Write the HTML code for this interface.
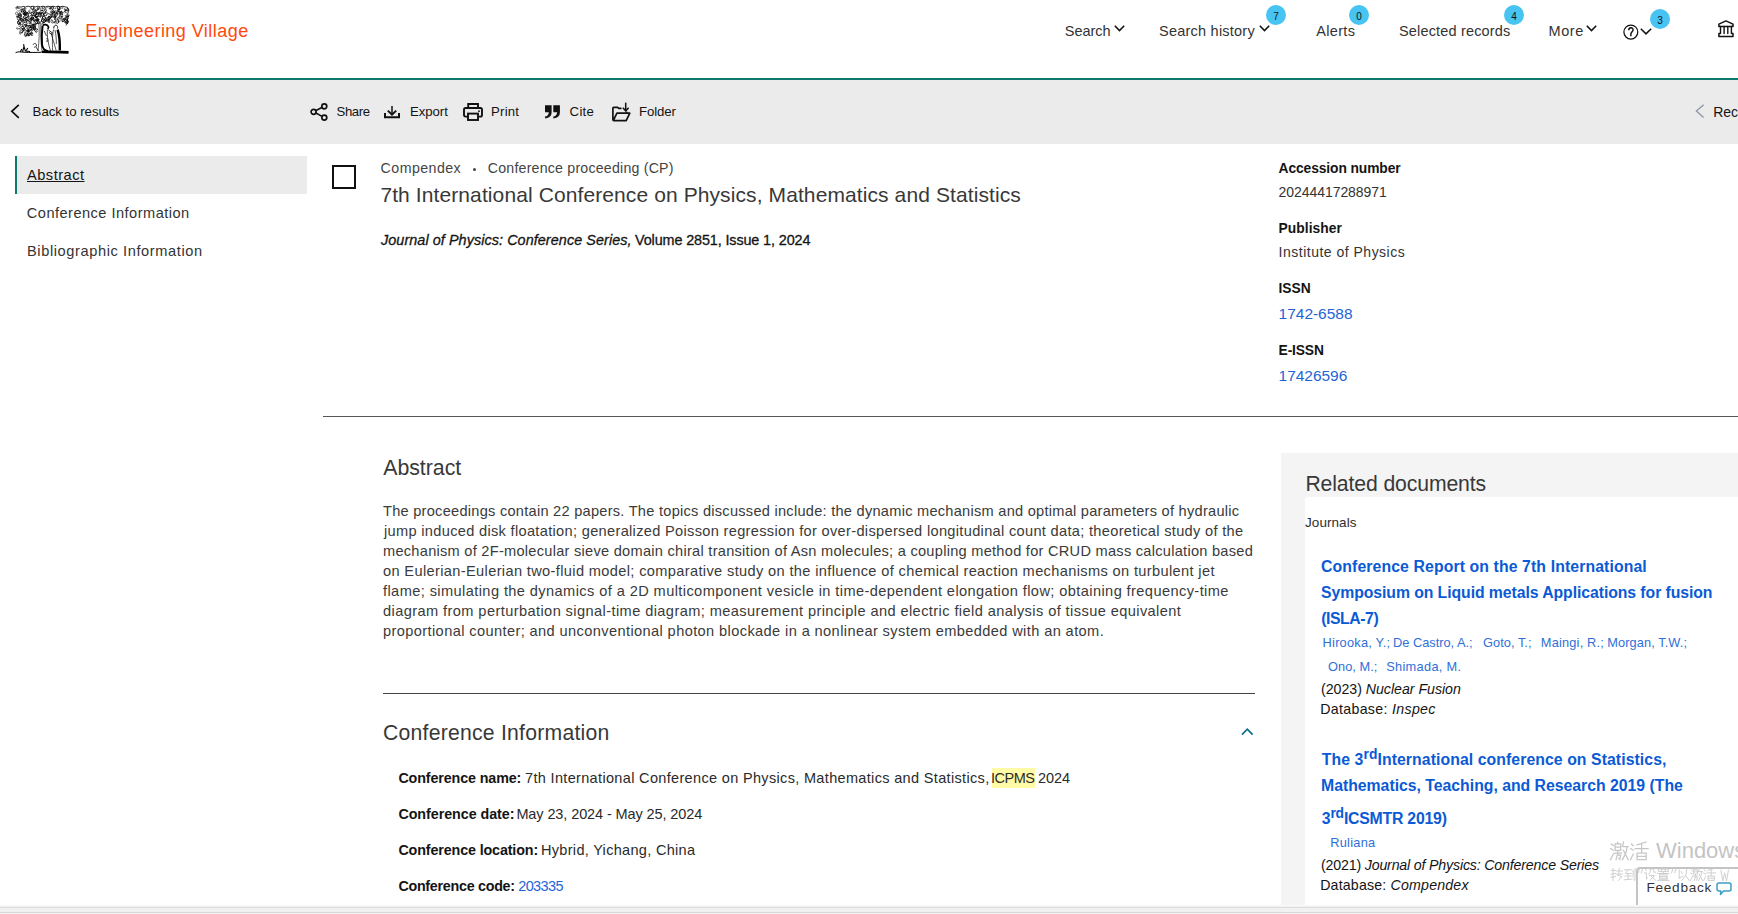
<!DOCTYPE html>
<html><head><meta charset="utf-8">
<style>
html,body{margin:0;padding:0;}
html{overflow:hidden;}
body{width:1738px;height:914px;overflow:hidden;position:relative;background:#fff;font-family:"Liberation Sans",sans-serif;}
.t{position:absolute;white-space:nowrap;line-height:1;font-family:"Liberation Sans",sans-serif;}
.abs{position:absolute;}
svg{position:absolute;overflow:visible;}
.badge{position:absolute;width:20px;height:20px;border-radius:50%;background:#47c4f1;color:#111;font-size:10px;line-height:23px;text-align:center;font-family:"Liberation Sans",sans-serif;}
</style></head><body>
<!-- header -->
<svg style="left:0;top:0" width="80" height="60" viewBox="0 0 80 60"><path d="M20.4 14.6A0.9 0.9 0 1 1 19.3 15.0M43.6 8.8A1.0 1.0 0 0 1 43.2 6.9M33.0 13.6A1.1 1.1 0 1 1 32.8 12.4M61.7 16.6A1.7 1.7 0 0 1 60.3 19.6M22.2 14.0A0.9 0.9 0 1 1 22.0 13.1M25.8 15.3A1.5 1.5 0 1 1 27.8 13.3M19.0 23.5A1.0 1.0 0 1 1 20.0 25.1M67.7 20.0A1.3 1.3 0 1 1 65.7 21.8M19.5 12.0A1.3 1.3 0 1 1 17.6 12.4M64.4 13.1A0.8 0.8 0 1 1 65.3 12.0M18.9 28.8A0.8 0.8 0 1 1 19.4 30.1M53.9 20.8A1.4 1.4 0 1 1 51.4 21.5M62.0 19.1A1.3 1.3 0 1 1 63.2 16.7M29.8 12.4A1.2 1.2 0 1 1 30.5 10.2M49.4 20.4A1.1 1.1 0 1 1 48.8 20.2M32.2 31.2A0.8 0.8 0 1 1 31.9 29.8M60.7 13.6A0.9 0.9 0 1 1 60.0 12.5M52.5 13.3A1.2 1.2 0 0 1 51.1 11.3M31.4 35.5A1.6 1.6 0 0 1 33.1 32.9M67.7 20.9A1.2 1.2 0 1 1 66.2 21.9M40.0 15.2A1.0 1.0 0 1 1 39.8 15.8M19.8 28.6A0.9 0.9 0 1 1 21.5 29.1M42.7 20.1A1.1 1.1 0 1 1 44.5 20.3M61.8 11.9A1.5 1.5 0 1 1 60.7 11.9M33.0 34.6A1.0 1.0 0 1 1 32.7 33.9M28.8 29.1A1.0 1.0 0 1 1 28.9 28.1M57.2 8.8A1.2 1.2 0 0 1 58.4 10.8M31.5 21.0A1.3 1.3 0 1 1 33.3 21.6M23.6 20.9A1.5 1.5 0 1 1 26.2 19.6M29.2 32.8A1.5 1.5 0 1 1 27.8 33.3M57.6 19.2A1.5 1.5 0 1 1 55.7 17.3M29.1 19.2A0.8 0.8 0 1 1 29.2 17.7M22.7 20.7A1.0 1.0 0 1 1 23.7 21.6M65.0 18.3A1.3 1.3 0 1 1 66.3 20.3M31.4 28.3A1.1 1.1 0 1 1 29.4 27.7M24.4 28.7A1.2 1.2 0 1 1 23.1 28.3M54.7 19.0A1.7 1.7 0 1 1 52.4 20.0M49.6 20.4A1.0 1.0 0 1 1 48.7 19.1M16.2 8.4A1.0 1.0 0 1 1 17.6 8.8M17.9 8.6A1.5 1.5 0 1 1 17.6 10.3M33.9 22.3A1.5 1.5 0 1 1 31.2 22.4M21.0 33.6A0.9 0.9 0 1 1 20.5 32.3M18.9 14.1A1.5 1.5 0 1 1 19.2 16.9M63.8 21.0A1.5 1.5 0 1 1 65.6 18.7M27.7 18.1A1.1 1.1 0 1 1 29.5 17.2M58.7 6.7A1.3 1.3 0 0 1 58.2 9.3M19.5 24.7A0.9 0.9 0 1 1 18.6 25.7M27.0 28.5A1.3 1.3 0 1 1 25.9 30.5M41.3 21.3A1.4 1.4 0 1 1 40.4 21.9M17.7 14.8A0.9 0.9 0 1 1 17.3 15.8M19.5 19.5A1.3 1.3 0 0 1 17.4 21.2M24.8 11.7A1.0 1.0 0 1 1 24.0 13.1M59.9 20.2A1.0 1.0 0 1 1 59.3 19.8M41.9 12.6A0.8 0.8 0 1 1 41.2 12.0M44.5 21.9A1.0 1.0 0 1 1 43.5 20.9M33.9 29.8A1.4 1.4 0 1 1 36.1 31.7M20.6 15.2A1.4 1.4 0 1 1 19.7 12.9M60.0 16.2A1.5 1.5 0 1 1 60.8 16.8M30.5 15.5A1.2 1.2 0 1 1 31.2 17.6M53.0 15.6A1.7 1.7 0 1 1 53.5 17.5M23.4 17.6A1.6 1.6 0 0 1 26.1 19.2M24.5 10.4A1.2 1.2 0 1 1 24.6 9.5M26.1 36.6A1.4 1.4 0 0 1 25.1 34.0M61.0 12.3A1.3 1.3 0 0 1 58.6 11.5M25.1 21.1A0.9 0.9 0 1 1 26.5 21.1M42.4 15.3A1.3 1.3 0 1 1 44.2 14.8M49.9 9.5A1.7 1.7 0 1 1 51.0 12.1M56.8 16.0A1.3 1.3 0 1 1 54.4 14.8M41.9 17.5A0.8 0.8 0 1 1 41.5 18.8M23.3 22.7A1.7 1.7 0 1 1 20.2 22.0M33.2 6.5A1.6 1.6 0 1 1 31.0 8.4M47.3 6.9A0.8 0.8 0 1 1 45.8 7.5M41.5 11.9A1.1 1.1 0 1 1 40.8 11.4M26.6 24.9A1.0 1.0 0 0 1 25.3 26.4M55.3 14.5A1.6 1.6 0 1 1 53.3 14.4M38.7 9.4A1.0 1.0 0 1 1 39.9 9.0M40.0 22.7A1.3 1.3 0 1 1 39.0 21.1M28.4 31.8A0.9 0.9 0 1 1 29.3 31.4M30.8 22.4A1.0 1.0 0 1 1 30.5 22.1M67.1 12.7A1.5 1.5 0 1 1 67.6 10.5M26.9 20.7A1.0 1.0 0 1 1 27.7 22.2M23.9 10.7A0.8 0.8 0 1 1 25.2 11.4M57.4 14.2A0.9 0.9 0 0 1 57.9 12.5M18.5 19.8A1.1 1.1 0 1 1 19.1 19.5M18.1 14.7A1.6 1.6 0 1 1 17.4 11.9M33.4 15.4A1.7 1.7 0 0 1 36.2 17.2M25.7 16.5A1.0 1.0 0 1 1 27.5 17.2M62.6 12.8A1.1 1.1 0 1 1 62.3 11.4M25.9 13.6A1.2 1.2 0 1 1 24.5 13.0M43.1 8.9A1.2 1.2 0 0 1 42.7 6.6M32.7 20.1A1.3 1.3 0 1 1 33.0 18.5M22.7 11.3A1.1 1.1 0 1 1 22.3 13.2M61.2 13.9A1.1 1.1 0 1 1 62.6 12.3M63.0 14.0A1.4 1.4 0 1 1 61.8 11.9M17.2 17.9A1.1 1.1 0 1 1 19.2 18.4M36.2 19.9A1.0 1.0 0 1 1 36.9 21.7M35.4 17.8A0.9 0.9 0 0 1 36.7 16.7M46.6 21.6A1.1 1.1 0 0 1 46.4 19.5M37.7 18.0A1.0 1.0 0 1 1 36.8 17.9M21.6 22.5A1.1 1.1 0 1 1 22.2 22.8M22.5 24.8A1.2 1.2 0 1 1 24.1 26.4M55.4 23.6A1.0 1.0 0 1 1 56.0 21.7M60.9 7.6A1.0 1.0 0 1 1 61.5 8.5M21.9 19.1A1.4 1.4 0 1 1 21.9 16.3M66.2 10.8A1.4 1.4 0 1 1 68.1 11.4M30.5 16.8A1.4 1.4 0 1 1 29.7 16.9M59.0 11.2A1.0 1.0 0 1 1 59.2 10.5M42.4 9.9A1.1 1.1 0 1 1 41.3 8.6M47.8 14.6A1.0 1.0 0 1 1 49.6 15.1M17.2 9.5A1.6 1.6 0 0 1 18.2 6.4M24.9 33.5A1.2 1.2 0 1 1 26.0 34.1M54.6 12.2A0.8 0.8 0 1 1 53.8 10.7M33.3 29.3A1.1 1.1 0 0 1 35.4 29.1M66.3 19.9A1.4 1.4 0 1 1 67.3 19.5M34.5 26.9A1.1 1.1 0 1 1 35.3 26.7M52.3 12.2A0.9 0.9 0 1 1 51.8 10.6M65.6 16.7A1.0 1.0 0 1 1 66.0 16.9M19.8 32.4A1.4 1.4 0 1 1 21.5 33.4M34.6 12.5A1.3 1.3 0 1 1 35.6 14.5" fill="none" stroke="#000" stroke-width="0.55"/><path d="M63.8 19.8A1.3 1.3 0 1 1 65.8 21.3M41.4 14.6A1.7 1.7 0 1 1 40.6 13.2M62.8 21.6A1.7 1.7 0 0 1 65.4 19.4M56.6 15.1A0.9 0.9 0 1 1 57.1 15.2M45.1 18.9A1.0 1.0 0 1 1 45.3 20.8M21.2 20.0A1.0 1.0 0 1 1 21.7 19.9M30.6 34.0A1.0 1.0 0 1 1 31.4 34.4M29.8 11.3A1.5 1.5 0 1 1 27.0 12.1M38.6 9.0A0.8 0.8 0 1 1 36.9 9.1M28.5 32.8A1.3 1.3 0 1 1 29.5 30.3M25.4 18.4A1.3 1.3 0 1 1 24.5 16.1M20.2 22.1A1.5 1.5 0 1 1 18.6 21.5M35.1 26.1A1.6 1.6 0 1 1 32.4 27.1M47.7 17.0A1.3 1.3 0 0 1 49.9 18.6M53.0 17.3A1.5 1.5 0 1 1 54.4 19.5M31.7 27.9A1.0 1.0 0 1 1 32.2 27.3M31.8 27.1A1.0 1.0 0 1 1 32.6 27.6M53.0 12.4A1.0 1.0 0 1 1 54.3 12.3M37.6 31.4A1.6 1.6 0 1 1 37.9 30.3M23.2 19.3A1.4 1.4 0 1 1 20.7 19.8M66.4 21.7A1.4 1.4 0 1 1 67.4 20.3M28.2 33.7A1.7 1.7 0 1 1 25.8 32.4M59.4 9.3A1.5 1.5 0 1 1 59.0 6.5M22.4 9.4A1.3 1.3 0 1 1 21.4 10.1M67.5 22.1A1.7 1.7 0 1 1 65.0 20.0M29.3 28.4A1.4 1.4 0 1 1 29.7 29.6M33.1 16.9A1.6 1.6 0 1 1 30.4 18.3M67.7 23.5A1.3 1.3 0 1 1 68.4 21.5M51.2 8.7A1.3 1.3 0 1 1 51.8 9.2M28.7 21.0A0.9 0.9 0 1 1 29.4 21.6M24.9 14.3A1.4 1.4 0 1 1 26.8 12.5M24.7 25.3A1.4 1.4 0 1 1 25.0 26.5M67.4 8.3A1.3 1.3 0 1 1 66.1 10.0M26.1 8.4A0.9 0.9 0 1 1 25.2 7.3M46.0 11.5A1.0 1.0 0 1 1 46.6 10.8M65.9 8.7A0.9 0.9 0 1 1 64.4 8.4M47.6 18.5A1.3 1.3 0 1 1 47.8 19.2M26.8 36.5A1.4 1.4 0 1 1 28.7 36.1M42.7 16.8A1.7 1.7 0 1 1 42.3 18.9M27.3 34.0A1.3 1.3 0 1 1 27.4 34.7M58.8 7.0A1.3 1.3 0 0 1 58.9 9.7M38.3 22.5A1.7 1.7 0 1 1 39.7 20.2M38.4 14.8A1.3 1.3 0 1 1 39.7 15.4M55.4 12.8A0.9 0.9 0 1 1 54.4 12.5M33.1 13.9A1.4 1.4 0 1 1 34.0 15.8M56.7 11.8A1.0 1.0 0 1 1 56.3 11.1M43.9 7.5A0.9 0.9 0 1 1 43.6 8.8M34.6 21.7A1.0 1.0 0 1 1 35.8 21.6M36.9 15.1A1.5 1.5 0 1 1 39.0 15.1M53.3 16.0A1.5 1.5 0 1 1 50.9 14.2M35.2 29.3A1.1 1.1 0 1 1 35.2 27.9M24.1 23.1A1.5 1.5 0 1 1 24.4 24.5M24.2 31.1A1.6 1.6 0 0 1 24.4 27.9M59.0 20.0A1.2 1.2 0 1 1 59.4 18.7M34.4 11.6A1.0 1.0 0 1 1 36.3 11.3M25.0 13.8A1.0 1.0 0 1 1 24.4 15.5M30.8 13.9A1.6 1.6 0 1 1 32.2 15.6M29.5 21.6A0.9 0.9 0 0 1 29.6 23.5M58.3 12.3A1.3 1.3 0 1 1 60.9 12.8M31.5 16.4A0.9 0.9 0 1 1 32.7 15.5M33.7 27.9A0.9 0.9 0 1 1 35.3 27.6M52.1 13.7A1.3 1.3 0 0 1 54.4 12.7M57.8 13.7A1.4 1.4 0 1 1 59.3 11.7M60.4 9.4A0.9 0.9 0 1 1 60.3 8.2M37.0 16.4A1.2 1.2 0 1 1 35.2 15.3M32.8 26.8A0.9 0.9 0 1 1 34.3 26.5M22.0 29.3A1.6 1.6 0 1 1 24.4 31.1M21.0 27.9A1.7 1.7 0 1 1 22.1 29.7M35.4 20.2A0.9 0.9 0 1 1 33.6 20.4M46.9 14.1A1.6 1.6 0 1 1 46.0 12.8M22.5 30.9A1.1 1.1 0 1 1 20.6 31.8M50.4 14.1A1.4 1.4 0 1 1 49.6 16.6M38.2 18.7A1.3 1.3 0 1 1 36.0 18.7M33.5 6.8A1.5 1.5 0 1 1 31.8 6.3M32.5 18.7A1.0 1.0 0 1 1 32.5 17.9M28.1 28.4A1.3 1.3 0 0 1 25.9 29.9M60.8 18.1A1.2 1.2 0 1 1 61.4 17.3M25.1 11.9A1.4 1.4 0 1 1 23.6 14.0M26.6 13.9A1.6 1.6 0 1 1 27.4 17.0M41.2 10.5A1.3 1.3 0 1 1 41.9 12.9M58.0 21.0A1.3 1.3 0 1 1 56.4 21.2M29.9 30.3A0.9 0.9 0 1 1 28.6 30.1M47.7 21.7A1.0 1.0 0 0 1 49.5 22.8M23.9 13.0A0.9 0.9 0 1 1 23.3 13.7M38.8 8.4A0.8 0.8 0 1 1 38.2 7.6M27.5 15.1A1.3 1.3 0 1 1 28.5 13.1M49.7 6.8A1.1 1.1 0 1 1 49.0 7.5M63.5 19.4A1.2 1.2 0 1 1 61.7 20.6M25.6 20.9A1.1 1.1 0 1 1 25.9 21.3M33.5 12.0A1.6 1.6 0 1 1 35.3 12.2M33.0 17.3A0.9 0.9 0 1 1 31.5 18.0M68.9 14.6A1.4 1.4 0 1 1 66.3 15.5M32.6 18.6A0.9 0.9 0 1 1 32.8 19.8M28.2 26.9A1.0 1.0 0 1 1 29.4 27.6M34.8 22.2A1.6 1.6 0 1 1 32.9 23.7M25.5 14.5A1.4 1.4 0 0 1 24.8 11.8M35.5 12.4A1.2 1.2 0 1 1 35.5 14.4M68.2 15.6A1.1 1.1 0 1 1 66.2 16.5M43.5 10.3A0.9 0.9 0 0 1 42.0 9.6M19.6 20.2A1.5 1.5 0 1 1 22.6 20.0M53.0 15.1A1.4 1.4 0 1 1 55.0 13.2M44.6 18.0A1.4 1.4 0 1 1 44.2 19.3M18.5 28.3A0.9 0.9 0 1 1 17.0 27.5M43.9 22.0A1.1 1.1 0 1 1 45.0 21.8M17.1 22.1A1.4 1.4 0 1 1 18.5 24.4M45.4 13.9A1.1 1.1 0 1 1 46.9 13.9M20.4 17.8A1.5 1.5 0 1 1 21.5 16.5M38.0 15.6A1.3 1.3 0 1 1 35.5 16.0M33.2 29.3A0.9 0.9 0 1 1 31.7 28.7M27.5 19.9A1.4 1.4 0 1 1 26.9 17.2M49.6 19.1A1.4 1.4 0 1 1 50.6 17.3" fill="none" stroke="#000" stroke-width="0.8"/><g fill="#000"><ellipse cx="48.9" cy="19.9" rx="0.7" ry="0.5"/><ellipse cx="65.3" cy="10.7" rx="0.6" ry="0.7"/><ellipse cx="54.9" cy="15.7" rx="0.8" ry="0.7"/><ellipse cx="41.5" cy="13.3" rx="0.8" ry="0.6"/><ellipse cx="58.1" cy="21.9" rx="0.9" ry="0.3"/><ellipse cx="28.5" cy="31.0" rx="0.6" ry="0.5"/><ellipse cx="61.7" cy="12.1" rx="0.5" ry="0.6"/><ellipse cx="19.0" cy="23.2" rx="0.8" ry="0.5"/><ellipse cx="28.1" cy="30.8" rx="0.8" ry="0.6"/><ellipse cx="58.0" cy="10.7" rx="0.6" ry="0.3"/><ellipse cx="17.0" cy="16.7" rx="0.8" ry="0.6"/><ellipse cx="21.3" cy="11.6" rx="0.6" ry="0.6"/><ellipse cx="26.2" cy="25.5" rx="0.8" ry="0.6"/><ellipse cx="25.6" cy="26.7" rx="0.6" ry="0.3"/><ellipse cx="33.3" cy="15.8" rx="0.7" ry="0.4"/><ellipse cx="24.8" cy="10.0" rx="0.7" ry="0.5"/><ellipse cx="22.0" cy="9.6" rx="0.9" ry="0.5"/><ellipse cx="34.3" cy="12.1" rx="0.9" ry="0.6"/><ellipse cx="54.8" cy="17.2" rx="0.6" ry="0.5"/><ellipse cx="22.9" cy="25.6" rx="0.6" ry="0.6"/><ellipse cx="37.1" cy="20.2" rx="0.7" ry="0.7"/><ellipse cx="33.7" cy="27.8" rx="0.5" ry="0.5"/><ellipse cx="30.4" cy="33.1" rx="0.5" ry="0.6"/><ellipse cx="51.5" cy="20.1" rx="0.9" ry="0.5"/><ellipse cx="39.2" cy="8.0" rx="0.6" ry="0.4"/><ellipse cx="30.8" cy="27.5" rx="0.7" ry="0.4"/><ellipse cx="37.2" cy="10.1" rx="0.8" ry="0.4"/><ellipse cx="37.7" cy="16.6" rx="0.8" ry="0.6"/><ellipse cx="20.4" cy="33.8" rx="0.4" ry="0.4"/><ellipse cx="35.2" cy="28.4" rx="0.7" ry="0.4"/><ellipse cx="40.3" cy="17.2" rx="0.6" ry="0.4"/><ellipse cx="18.6" cy="20.3" rx="0.6" ry="0.6"/><ellipse cx="26.3" cy="17.5" rx="0.5" ry="0.5"/><ellipse cx="55.1" cy="8.6" rx="0.5" ry="0.6"/><ellipse cx="28.7" cy="31.1" rx="0.8" ry="0.6"/><ellipse cx="21.5" cy="20.5" rx="0.4" ry="0.6"/><ellipse cx="43.9" cy="22.5" rx="0.5" ry="0.6"/><ellipse cx="31.3" cy="21.7" rx="0.5" ry="0.5"/><ellipse cx="22.0" cy="8.7" rx="0.7" ry="0.4"/><ellipse cx="57.0" cy="13.7" rx="0.6" ry="0.3"/></g><path d="M17 8 Q19 5.8 21 7.2 Q23 5.6 25.5 7 Q28 5.5 30.5 6.8 Q33 5.6 35.5 6.9 Q38 5.5 40.5 6.8 Q43 5.6 45.5 6.9 Q48 5.5 50.5 6.8 Q53 5.6 55.5 6.9 Q58 5.5 60.5 6.8 Q63 5.6 65.5 7 Q68 6.5 68 9 Q69 12 67.6 14 Q69 17 67.5 20 Q68.5 23 66 25.5" fill="none" stroke="#000" stroke-width="0.8"/><path d="M40 23 L35 15 M41 22 L44 13 M43 23 L52 17 M39 23 L28 26" fill="none" stroke="#000" stroke-width="0.9"/><path d="M38.8 23 C39.6 31 39.2 41 38 51 M40.8 24 C40.6 33 41 43 41.8 50" fill="none" stroke="#000" stroke-width="0.6"/><path d="M42.6 25.6 C41.8 31 41.6 38 42 44.5 C42.4 48 44.5 50.5 48 51.2" fill="none" stroke="#000" stroke-width="2.0"/><path d="M42.8 25.5 C44 24.3 47.2 24.2 48.4 26.6 C48.8 27.6 48.2 28.5 47.6 29" fill="none" stroke="#000" stroke-width="1.7"/><path d="M47.4 29.5 C46.8 36 48.2 44 50.5 50.8" fill="none" stroke="#000" stroke-width="0.7"/><path d="M46.3 38.6 C47.8 38.4 48.4 40.2 47.4 41.4 C46.6 41.8 46.2 41 46.6 40.6 M44.2 31 L46.5 36" fill="none" stroke="#000" stroke-width="0.7"/><path d="M48.4 30 L53 33.4 M49 32.5 L52.5 35" fill="none" stroke="#000" stroke-width="0.8"/><path d="M53.8 28.5 C53.4 26.2 55 25 56.3 25.3 C57.6 25.6 57.9 27.2 57.4 28.6" fill="none" stroke="#000" stroke-width="0.9"/><path d="M57.6 29.6 C59.4 35 60 43 59.8 50.5" fill="none" stroke="#000" stroke-width="2.4"/><path d="M53.6 29.5 C52.4 34 52.2 42 52.6 50.5 M51 33 L56.2 50.6 M55 30 C56 34 56.5 40 56.3 44" fill="none" stroke="#000" stroke-width="0.65"/><path d="M15.6 52.6 C18 51.4 21 52 24 52.2 C30 52.6 36 52.4 41 52.3" fill="none" stroke="#000" stroke-width="1.0"/><path d="M41.5 51.8 C50 52 60 51.6 68.6 52.4" fill="none" stroke="#000" stroke-width="2.6"/><path d="M22.5 52 L24 46.5 L25.6 51.6 M24 46.5 L23.6 44.2 M26.2 50.5 L27.8 48 M20.2 52 L21.8 49 M25 51 L30 51.5" fill="none" stroke="#000" stroke-width="1.1"/><path d="M33 44.8 C34 42.8 35.8 43.2 36.6 45 C36.4 46.8 35 47.6 34 47 M36.2 47.2 L38.5 51" fill="none" stroke="#000" stroke-width="0.8"/></svg>
<div class="abs" style="left:0;top:78px;width:1738px;height:2px;background:#0b7a6c"></div>
<!-- nav chevrons -->
<svg style="left:1114px;top:25px" width="11" height="7" viewBox="0 0 11 7"><path d="M0.8 0.8 L5.5 5.6 L10.2 0.8" fill="none" stroke="#111" stroke-width="1.5"/></svg>
<svg style="left:1259px;top:25px" width="11" height="7" viewBox="0 0 11 7"><path d="M0.8 0.8 L5.5 5.6 L10.2 0.8" fill="none" stroke="#111" stroke-width="1.5"/></svg>
<svg style="left:1586px;top:25px" width="11" height="7" viewBox="0 0 11 7"><path d="M0.8 0.8 L5.5 5.6 L10.2 0.8" fill="none" stroke="#111" stroke-width="1.5"/></svg>
<svg style="left:1640px;top:27.6px" width="12" height="7" viewBox="0 0 12 7"><path d="M0.8 0.8 L6 5.9 L11.2 0.8" fill="none" stroke="#111" stroke-width="1.5"/></svg>
<!-- help circle -->
<svg style="left:1622.5px;top:23.5px" width="16" height="16" viewBox="0 0 16 16"><circle cx="7.85" cy="8.05" r="6.95" fill="none" stroke="#111" stroke-width="1.25"/><path d="M5.7 6.3 C5.8 4.5 6.9 3.8 8 3.8 C9.3 3.8 10.2 4.8 10.1 6 C10 7.4 8.2 8.2 7.9 9.8 L7.85 12.3" fill="none" stroke="#111" stroke-width="1.45"/></svg>
<!-- bank -->
<svg style="left:1714px;top:16px" width="24" height="24" viewBox="0 0 24 24"><path d="M4.9 10.4 L4.9 8.1 L11.95 4.9 L19 8.1 L19 10.4 Z" fill="none" stroke="#111" stroke-width="1.5" stroke-linejoin="round"/><path d="M6.5 10.4 L6.5 17.4 M17.4 10.4 L17.4 17.4 M10.1 10.4 L10.1 17.6 M13.8 10.4 L13.8 17.6" stroke="#111" stroke-width="1.4" stroke-linecap="round"/><path d="M6.5 17.4 L4.9 17.4 L4.9 20.6 L19 20.6 L19 17.4 L17.4 17.4" fill="none" stroke="#111" stroke-width="1.5" stroke-linejoin="round"/></svg>
<!-- badges -->
<div class="badge" style="left:1266px;top:5px">7</div>
<div class="badge" style="left:1349px;top:5px">0</div>
<div class="badge" style="left:1504px;top:5px">4</div>
<div class="badge" style="left:1650px;top:9px">3</div>

<!-- toolbar -->
<div class="abs" style="left:0;top:80px;width:1738px;height:64px;background:#ebebeb"></div>
<svg style="left:10px;top:104px" width="10" height="15" viewBox="0 0 10 15"><path d="M8.8 0.8 L1.8 7.3 L8.8 13.8" fill="none" stroke="#111" stroke-width="1.7"/></svg>
<!-- share -->
<svg style="left:310px;top:103px" width="18" height="18" viewBox="0 0 18 18"><line x1="3.6" y1="8.8" x2="14.3" y2="3.3" stroke="#111" stroke-width="1.6"/><line x1="3.6" y1="8.8" x2="14.3" y2="14.6" stroke="#111" stroke-width="1.6"/><circle cx="3.6" cy="8.8" r="2.5" fill="#ebebeb" stroke="#111" stroke-width="1.7"/><circle cx="14.3" cy="3.3" r="2.5" fill="#ebebeb" stroke="#111" stroke-width="1.7"/><circle cx="14.3" cy="14.6" r="2.5" fill="#ebebeb" stroke="#111" stroke-width="1.7"/></svg>
<!-- export -->
<svg style="left:384px;top:105px" width="16" height="14" viewBox="0 0 16 14"><path d="M1 8 L1 12.2 L15 12.2 L15 8" fill="none" stroke="#111" stroke-width="2"/><path d="M8 1 L8 9.5" stroke="#111" stroke-width="1.5"/><path d="M3.8 5.6 L8 9.6 L12.2 5.6" fill="none" stroke="#111" stroke-width="1.9"/></svg>
<!-- print -->
<svg style="left:463px;top:102.5px" width="20" height="18" viewBox="0 0 20 18"><path d="M5.2 5 L5.2 1 L15 1 L15 5" fill="none" stroke="#111" stroke-width="1.9"/><path d="M4.5 13.6 L2.6 13.6 Q1 13.6 1 12 L1 6.6 Q1 5 2.6 5 L17.4 5 Q19 5 19 6.6 L19 12 Q19 13.6 17.4 13.6 L15.5 13.6" fill="none" stroke="#111" stroke-width="1.9"/><rect x="5" y="10.6" width="10" height="6.4" fill="none" stroke="#111" stroke-width="1.9"/><circle cx="16" cy="8.2" r="0.9" fill="#111"/></svg>
<!-- cite -->
<svg style="left:544px;top:105px" width="17" height="14" viewBox="0 0 17 14"><path d="M1 0.3 L7.6 0.3 L7.6 7.5 Q7.6 12.6 1.2 13.4 L0.9 11.6 Q4.6 11 4.8 7.2 L1 7.2 Z" fill="#111"/><path d="M9.3 0.3 L15.9 0.3 L15.9 7.5 Q15.9 12.6 9.5 13.4 L9.2 11.6 Q12.9 11 13.1 7.2 L9.3 7.2 Z" fill="#111"/></svg>
<!-- folder -->
<svg style="left:611.5px;top:101.5px" width="19" height="20" viewBox="0 0 19 20"><path d="M13.7 0.6 L13.7 8.6" stroke="#111" stroke-width="1.5"/><path d="M10.8 5.8 L13.7 8.8 L16.6 5.8" fill="none" stroke="#111" stroke-width="1.5"/><path d="M9.5 6.4 L6.8 6.4 L5.6 5.4 L1.6 5.4 Q0.9 5.4 0.9 6.1 L0.9 17.6 Q0.9 18.6 1.9 18.6 L14.2 18.6 L17.8 11.2 L4.9 11.2 L1.4 18.4" fill="none" stroke="#111" stroke-width="1.7" stroke-linejoin="round"/><path d="M14.6 11 L14.6 9.6" stroke="#111" stroke-width="1.6"/></svg>
<!-- right prev chevron -->
<svg style="left:1694.5px;top:104px" width="10" height="15" viewBox="0 0 10 15"><path d="M8.6 0.8 L1.4 7.1 L8.6 13.6" fill="none" stroke="#8b95a5" stroke-width="1.3"/></svg>

<!-- sidebar -->
<div class="abs" style="left:15px;top:156px;width:290px;height:38px;background:#ebebeb;border-left:2px solid #0b7a6c"></div>

<!-- record header -->
<div class="abs" style="left:332px;top:165px;width:24px;height:24px;box-sizing:border-box;border:2px solid #111"></div>
<div class="abs" style="left:472.9px;top:167.7px;width:3px;height:3px;border-radius:50%;background:#444"></div>
<div class="abs" style="left:323px;top:416px;width:1415px;height:1px;background:#575757"></div>

<!-- abstract / conference -->
<div class="abs" style="left:383px;top:693px;width:872px;height:1px;background:#444"></div>
<div class="abs" style="left:992px;top:768px;width:43px;height:20px;background:#fffaa6"></div>
<svg style="left:1241px;top:727px" width="13" height="9" viewBox="0 0 13 9"><path d="M1 7.6 L6.3 2.2 L11.6 7.6" fill="none" stroke="#0e6f8c" stroke-width="1.7"/></svg>

<!-- related panel -->
<div class="abs" style="left:1281px;top:453px;width:457px;height:452px;background:#f4f4f4"></div>
<div class="abs" style="left:1305px;top:497px;width:433px;height:408px;background:#fff;border-top-left-radius:4px"></div>

<!-- feedback -->
<div class="abs" style="left:1635.5px;top:867px;width:106px;height:44px;box-sizing:border-box;border:2px solid #c4c4c4;border-radius:4px;background:#fff"></div>
<svg style="left:1716px;top:882px" width="16" height="14" viewBox="0 0 16 14"><path d="M3 1 L13 1 Q15 1 15 3 L15 7 Q15 9 13 9 L7.5 9 L4.5 12.5 L4.8 9 L3 9 Q1 9 1 7 L1 3 Q1 1 3 1 Z" fill="none" stroke="#3c9fc4" stroke-width="1.5" stroke-linejoin="round"/></svg>
<div class="t" style="left:85.20px;top:22.01px;font-size:18px;color:#ff4a0c;letter-spacing:0.456px;">Engineering Village</div>
<div class="t" style="left:1064.80px;top:24.01px;font-size:14.5px;color:#333;letter-spacing:-0.040px;">Search</div>
<div class="t" style="left:1159.00px;top:24.01px;font-size:14.5px;color:#333;letter-spacing:0.231px;">Search history</div>
<div class="t" style="left:1316.20px;top:24.01px;font-size:14.5px;color:#333;letter-spacing:0.340px;">Alerts</div>
<div class="t" style="left:1399.00px;top:24.01px;font-size:14.5px;color:#333;letter-spacing:0.167px;">Selected records</div>
<div class="t" style="left:1548.40px;top:24.01px;font-size:14.5px;color:#333;letter-spacing:0.667px;">More</div>
<div class="t" style="left:32.60px;top:105.00px;font-size:13.2px;color:#141414;letter-spacing:-0.007px;">Back to results</div>
<div class="t" style="left:336.60px;top:105.00px;font-size:13.2px;color:#141414;letter-spacing:-0.450px;">Share</div>
<div class="t" style="left:410.00px;top:105.00px;font-size:13.2px;color:#141414;letter-spacing:-0.060px;">Export</div>
<div class="t" style="left:491.00px;top:105.00px;font-size:13.2px;color:#141414;letter-spacing:0.225px;">Print</div>
<div class="t" style="left:569.60px;top:105.00px;font-size:13.2px;color:#141414;letter-spacing:0.267px;">Cite</div>
<div class="t" style="left:639.00px;top:105.00px;font-size:13.2px;color:#141414;letter-spacing:-0.080px;">Folder</div>
<div class="t" style="left:1713.20px;top:105.01px;font-size:14px;color:#141414;">Rec</div>
<div class="t" style="left:27.00px;top:168.00px;font-size:14.6px;color:#141414;letter-spacing:0.500px;text-decoration:underline;text-underline-offset:1px;">Abstract</div>
<div class="t" style="left:26.80px;top:206.00px;font-size:14.6px;color:#333;letter-spacing:0.471px;">Conference Information</div>
<div class="t" style="left:27.00px;top:244.00px;font-size:14.6px;color:#333;letter-spacing:0.604px;">Bibliographic Information</div>
<div class="t" style="left:380.60px;top:161.01px;font-size:14.2px;color:#444;letter-spacing:0.450px;">Compendex</div>
<div class="t" style="left:487.80px;top:161.01px;font-size:14.2px;color:#444;letter-spacing:0.204px;">Conference proceeding (CP)</div>
<div class="t" style="left:380.40px;top:184.00px;font-size:21px;color:#383838;letter-spacing:0.100px;">7th International Conference on Physics, Mathematics and Statistics</div>
<div class="t" style="left:381.00px;top:233.01px;font-size:14.4px;font-style:italic;color:#141414;letter-spacing:0.068px;-webkit-text-stroke:0.3px #141414;">Journal of Physics: Conference Series,</div>
<div class="t" style="left:635.00px;top:233.01px;font-size:14.4px;color:#141414;letter-spacing:-0.120px;-webkit-text-stroke:0.3px #141414;">Volume 2851, Issue 1, 2024</div>
<div class="t" style="left:1278.60px;top:162.01px;font-size:13.8px;font-weight:700;color:#141414;letter-spacing:-0.093px;">Accession number</div>
<div class="t" style="left:1278.60px;top:185.01px;font-size:14px;color:#333;letter-spacing:-0.062px;">20244417288971</div>
<div class="t" style="left:1278.60px;top:222.01px;font-size:13.8px;font-weight:700;color:#141414;letter-spacing:0.037px;">Publisher</div>
<div class="t" style="left:1278.60px;top:245.01px;font-size:14px;color:#333;letter-spacing:0.495px;">Institute of Physics</div>
<div class="t" style="left:1278.60px;top:282.01px;font-size:13.8px;font-weight:700;color:#141414;letter-spacing:-0.067px;">ISSN</div>
<div class="t" style="left:1278.60px;top:306.00px;font-size:15.5px;color:#1f64d6;letter-spacing:-0.025px;">1742-6588</div>
<div class="t" style="left:1278.60px;top:344.01px;font-size:13.8px;font-weight:700;color:#141414;letter-spacing:-0.140px;">E-ISSN</div>
<div class="t" style="left:1278.60px;top:368.00px;font-size:15.5px;color:#1f64d6;letter-spacing:-0.043px;">17426596</div>
<div class="t" style="left:383.20px;top:458.00px;font-size:21.3px;color:#383838;letter-spacing:-0.014px;">Abstract</div>
<div class="t" style="left:383.00px;top:504.00px;font-size:14.6px;color:#3a3a3a;letter-spacing:0.259px;">The proceedings contain 22 papers. The topics discussed include: the dynamic mechanism and optimal parameters of hydraulic</div>
<div class="t" style="left:384.00px;top:524.00px;font-size:14.6px;color:#3a3a3a;letter-spacing:0.317px;">jump induced disk floatation; generalized Poisson regression for over-dispersed longitudinal count data; theoretical study of the</div>
<div class="t" style="left:383.00px;top:544.00px;font-size:14.6px;color:#3a3a3a;letter-spacing:0.266px;">mechanism of 2F-molecular sieve domain chiral transition of Asn molecules; a coupling method for CRUD mass calculation based</div>
<div class="t" style="left:383.00px;top:564.00px;font-size:14.6px;color:#3a3a3a;letter-spacing:0.358px;">on Eulerian-Eulerian two-fluid model; comparative study on the influence of chemical reaction mechanisms on turbulent jet</div>
<div class="t" style="left:383.00px;top:584.00px;font-size:14.6px;color:#3a3a3a;letter-spacing:0.407px;">flame; simulating the dynamics of a 2D multicomponent vesicle in time-dependent elongation flow; obtaining frequency-time</div>
<div class="t" style="left:383.00px;top:604.00px;font-size:14.6px;color:#3a3a3a;letter-spacing:0.410px;">diagram from perturbation signal-time diagram; measurement principle and electric field analysis of tissue equivalent</div>
<div class="t" style="left:383.00px;top:624.00px;font-size:14.6px;color:#3a3a3a;letter-spacing:0.392px;">proportional counter; and unconventional photon blockade in a nonlinear system embedded with an atom.</div>
<div class="t" style="left:383.00px;top:722.01px;font-size:21.2px;color:#383838;letter-spacing:0.233px;">Conference Information</div>
<div class="t" style="left:398.40px;top:771.00px;font-size:14.3px;font-weight:700;color:#141414;letter-spacing:-0.120px;">Conference name:</div>
<div class="t" style="left:525.00px;top:771.01px;font-size:14.5px;color:#2a2a2a;letter-spacing:0.336px;">7th International Conference on Physics, Mathematics and Statistics,</div>
<div class="t" style="left:991.00px;top:771.01px;font-size:14.5px;color:#2a2a2a;letter-spacing:-0.500px;">ICPMS</div>
<div class="t" style="left:1038.00px;top:771.01px;font-size:14.5px;color:#2a2a2a;letter-spacing:-0.033px;">2024</div>
<div class="t" style="left:398.40px;top:807.00px;font-size:14.3px;font-weight:700;color:#141414;letter-spacing:-0.047px;">Conference date:</div>
<div class="t" style="left:516.40px;top:807.01px;font-size:14.5px;color:#2a2a2a;letter-spacing:-0.104px;">May 23, 2024 - May 25, 2024</div>
<div class="t" style="left:398.40px;top:843.00px;font-size:14.3px;font-weight:700;color:#141414;letter-spacing:-0.126px;">Conference location:</div>
<div class="t" style="left:541.00px;top:843.01px;font-size:14.5px;color:#2a2a2a;letter-spacing:0.310px;">Hybrid, Yichang, China</div>
<div class="t" style="left:398.40px;top:879.00px;font-size:14.3px;font-weight:700;color:#141414;letter-spacing:-0.273px;">Conference code:</div>
<div class="t" style="left:518.20px;top:879.01px;font-size:14.5px;color:#1f64d6;letter-spacing:-0.600px;">203335</div>
<div class="t" style="left:1305.40px;top:473.01px;font-size:21.2px;color:#383838;letter-spacing:-0.112px;">Related documents</div>
<div class="t" style="left:1305.00px;top:516.01px;font-size:13.5px;color:#2e2e2e;letter-spacing:0.071px;">Journals</div>
<div class="t" style="left:1321.00px;top:559.00px;font-size:15.8px;font-weight:700;color:#0b5ad5;letter-spacing:0.110px;">Conference Report on the 7th International</div>
<div class="t" style="left:1321.00px;top:585.00px;font-size:15.8px;font-weight:700;color:#0b5ad5;letter-spacing:-0.076px;">Symposium on Liquid metals Applications for fusion</div>
<div class="t" style="left:1321.20px;top:611.00px;font-size:15.8px;font-weight:700;color:#0b5ad5;letter-spacing:-0.429px;">(ISLA-7)</div>
<div class="t" style="left:1322.60px;top:637.01px;font-size:12.8px;color:#2f6fd8;letter-spacing:0.227px;">Hirooka, Y.;</div>
<div class="t" style="left:1393.00px;top:637.01px;font-size:12.8px;color:#2f6fd8;">De Castro, A.;</div>
<div class="t" style="left:1483.00px;top:637.01px;font-size:12.8px;color:#2f6fd8;letter-spacing:0.050px;">Goto, T.;</div>
<div class="t" style="left:1540.80px;top:637.01px;font-size:12.8px;color:#2f6fd8;letter-spacing:0.190px;">Maingi, R.;</div>
<div class="t" style="left:1607.20px;top:637.01px;font-size:12.8px;color:#2f6fd8;letter-spacing:0.092px;">Morgan, T.W.;</div>
<div class="t" style="left:1328.00px;top:661.01px;font-size:12.8px;color:#2f6fd8;letter-spacing:0.043px;">Ono, M.;</div>
<div class="t" style="left:1386.20px;top:661.01px;font-size:12.8px;color:#2f6fd8;letter-spacing:0.310px;">Shimada, M.</div>
<div class="t" style="left:1321.00px;top:682.01px;font-size:14.2px;color:#141414;letter-spacing:-0.025px;">(2023) <i>Nuclear Fusion</i></div>
<div class="t" style="left:1320.20px;top:702.01px;font-size:14.2px;color:#141414;letter-spacing:0.320px;">Database: <i>Inspec</i></div>
<div class="t" style="left:1321.80px;top:752.00px;font-size:15.8px;font-weight:700;color:#0b5ad5;letter-spacing:0.073px;">The 3<span style="font-size:0.88em;position:relative;top:-0.45em">rd</span>International conference on Statistics,</div>
<div class="t" style="left:1321.00px;top:778.00px;font-size:15.8px;font-weight:700;color:#0b5ad5;letter-spacing:-0.011px;">Mathematics, Teaching, and Research 2019 (The</div>
<div class="t" style="left:1321.80px;top:811.00px;font-size:15.8px;font-weight:700;color:#0b5ad5;letter-spacing:-0.207px;">3<span style="font-size:0.88em;position:relative;top:-0.45em">rd</span>ICSMTR 2019)</div>
<div class="t" style="left:1330.20px;top:837.01px;font-size:12.8px;color:#2f6fd8;letter-spacing:0.267px;">Ruliana</div>
<div class="t" style="left:1321.00px;top:858.01px;font-size:14.2px;color:#141414;letter-spacing:-0.174px;">(2021) <i>Journal of Physics: Conference Series</i></div>
<div class="t" style="left:1320.20px;top:878.01px;font-size:14.2px;color:#141414;letter-spacing:0.178px;">Database: <i>Compendex</i></div>
<div class="t" style="left:1646.60px;top:881.00px;font-size:13.6px;color:#333;letter-spacing:0.700px;">Feedback</div>

<!-- windows watermark -->
<svg style="left:0;top:0" width="1738" height="914" viewBox="0 0 1738 914"><path d="M1611.4 843.9 L1613.3 845.7 M1610.5 848.5 L1613.3 850.3 M1610.5 859.6 L1613.3 854.0 M1617.9 842.0 L1617.0 843.9 M1615.1 843.9 L1620.7 843.9 L1620.7 850.3 L1615.1 850.3 L1615.1 843.9 M1615.1 847.1 L1620.7 847.1 M1614.2 853.1 L1621.6 853.1 M1617.9 851.2 L1617.9 853.1 L1616.0 859.6 M1617.9 855.0 L1620.7 855.0 L1619.8 859.6 L1618.8 858.6 M1623.5 842.0 L1622.5 846.6 M1622.5 846.6 L1628.1 846.6 M1627.2 846.6 L1626.2 852.2 L1622.5 859.6 M1623.5 850.3 L1628.1 859.6" fill="none" stroke="#c6c6c6" stroke-width="1.25" stroke-linecap="square"/><path d="M1631.4 843.9 L1633.3 845.7 M1630.5 848.5 L1633.3 850.3 M1630.5 859.6 L1633.3 854.0 M1646.2 842.0 L1637.0 844.8 M1635.1 848.5 L1648.1 848.5 M1641.6 843.9 L1641.6 853.1 M1637.0 853.1 L1646.2 853.1 L1646.2 859.6 L1637.0 859.6 L1637.0 853.1 M1637.0 856.3 L1646.2 856.3" fill="none" stroke="#c6c6c6" stroke-width="1.25" stroke-linecap="square"/><path d="M1611.1 870.4 L1615.5 870.4 M1613.0 868.5 L1613.0 880.4 M1611.1 874.1 L1615.5 873.5 M1611.1 877.2 L1615.5 876.6 M1616.8 871.0 L1622.4 871.0 M1619.2 868.5 L1618.6 874.8 M1616.1 874.1 L1622.4 874.1 M1618.0 875.4 L1621.8 876.6 L1618.6 880.4" fill="none" stroke="#cfcfcf" stroke-width="1.0" stroke-linecap="square"/><path d="M1624.3 869.8 L1631.8 869.8 M1628.1 869.8 L1625.6 873.5 L1631.2 873.5 M1628.1 873.5 L1628.1 879.1 M1625.0 876.0 L1631.2 876.0 M1624.3 879.8 L1631.8 879.1 M1633.1 870.4 L1633.1 877.2 M1635.0 868.5 L1635.0 880.4 L1633.7 879.8" fill="none" stroke="#cfcfcf" stroke-width="1.0" stroke-linecap="square"/><path d="M1639.4 869.1 L1638.2 872.9 M1642.5 869.1 L1641.3 872.9" fill="none" stroke="#cfcfcf" stroke-width="1.0" stroke-linecap="square"/><path d="M1645.2 869.1 L1646.4 870.4 M1644.5 872.9 L1646.4 872.9 L1646.4 879.1 L1647.7 877.9 M1650.2 869.1 L1650.2 872.2 L1648.9 874.1 M1650.2 869.1 L1653.9 869.1 L1653.9 872.2 L1655.8 872.2 M1649.5 875.4 L1654.5 875.4 L1650.2 880.4 M1650.8 876.0 L1655.8 880.4" fill="none" stroke="#cfcfcf" stroke-width="1.0" stroke-linecap="square"/><path d="M1658.4 869.1 L1668.4 869.1 L1668.4 871.6 L1658.4 871.6 L1658.4 869.1 M1661.5 869.1 L1661.5 871.6 M1665.2 869.1 L1665.2 871.6 M1657.7 873.5 L1669.0 873.5 M1663.4 872.2 L1663.4 874.1 M1659.6 874.8 L1667.1 874.8 L1667.1 879.8 L1659.6 879.8 L1659.6 874.8 M1659.6 876.6 L1667.1 876.6 M1659.6 878.2 L1667.1 878.2 M1657.7 880.4 L1669.0 880.4" fill="none" stroke="#cfcfcf" stroke-width="1.0" stroke-linecap="square"/><path d="M1672.8 869.1 L1671.6 872.9 M1675.9 869.1 L1674.7 872.9" fill="none" stroke="#cfcfcf" stroke-width="1.0" stroke-linecap="square"/><path d="M1679.2 869.8 L1679.2 878.5 L1682.9 876.0 M1681.1 871.6 L1682.3 873.5 M1686.7 869.1 L1686.1 874.8 L1681.7 880.4 M1685.4 875.4 L1689.2 880.4" fill="none" stroke="#cfcfcf" stroke-width="1.0" stroke-linecap="square"/><path d="M1691.1 869.8 L1692.4 871.0 M1690.5 872.9 L1692.4 874.1 M1690.5 880.4 L1692.4 876.6 M1695.5 868.5 L1694.9 869.8 M1693.6 869.8 L1697.4 869.8 L1697.4 874.1 L1693.6 874.1 L1693.6 869.8 M1693.6 871.9 L1697.4 871.9 M1693.0 876.0 L1698.0 876.0 M1695.5 874.8 L1695.5 876.0 L1694.3 880.4 M1695.5 877.2 L1697.4 877.2 L1696.8 880.4 L1696.1 879.8 M1699.3 868.5 L1698.6 871.6 M1698.6 871.6 L1702.4 871.6 M1701.8 871.6 L1701.1 875.4 L1698.6 880.4 M1699.3 874.1 L1702.4 880.4" fill="none" stroke="#cfcfcf" stroke-width="1.0" stroke-linecap="square"/><path d="M1704.3 869.8 L1705.6 871.0 M1703.7 872.9 L1705.6 874.1 M1703.7 880.4 L1705.6 876.6 M1714.3 868.5 L1708.1 870.4 M1706.8 872.9 L1715.6 872.9 M1711.2 869.8 L1711.2 876.0 M1708.1 876.0 L1714.3 876.0 L1714.3 880.4 L1708.1 880.4 L1708.1 876.0 M1708.1 878.2 L1714.3 878.2" fill="none" stroke="#cfcfcf" stroke-width="1.0" stroke-linecap="square"/><path d="M1720.9 870.2 L1722.8 880.9 L1724.7 872.8 L1726.5 880.9 L1728.4 870.2" fill="none" stroke="#cfcfcf" stroke-width="1.0" stroke-linecap="square"/></svg><div style="position:absolute;white-space:nowrap;line-height:1;font-family:Liberation Sans,sans-serif;left:1656px;top:840.4px;font-size:22px;color:#c4c4c4">Windows</div>

<!-- bottom scrollbar -->
<div class="abs" style="left:0;top:905px;width:1738px;height:9px;background:#f1f1f1"></div>
<div class="abs" style="left:0;top:905px;width:1738px;height:1px;background:#fafafa"></div>
<div class="abs" style="left:0;top:907px;width:1738px;height:1px;background:#dcdcdc"></div>
<div class="abs" style="left:0;top:912px;width:1738px;height:1px;background:#d8d8d8"></div>
</body></html>
